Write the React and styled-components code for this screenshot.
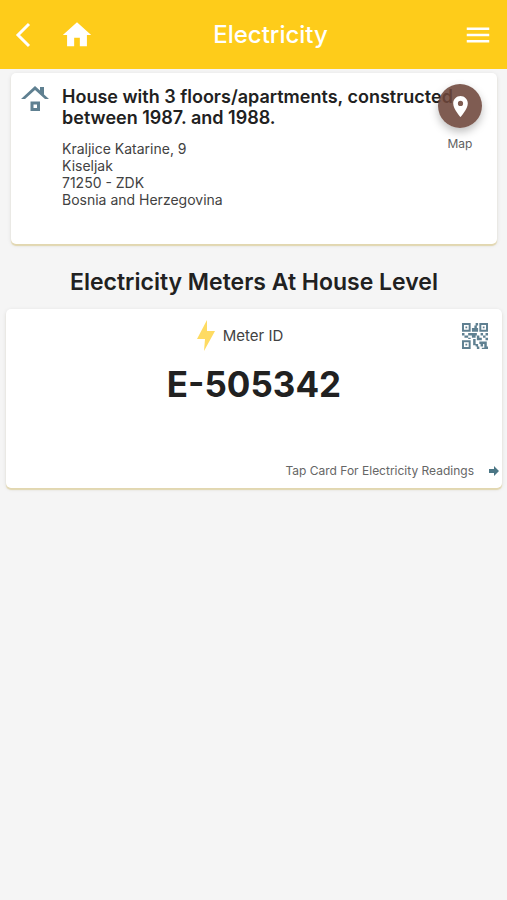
import React from "react";
import styled, { createGlobalStyle } from "styled-components";
import { MdHome, MdLocationOn, MdMenu } from "react-icons/md";

const GlobalStyle = createGlobalStyle`
  * {
    box-sizing: border-box;
  }

  body {
    margin: 0;
    background-color: #f5f5f5;
    color: #212121;
    font-family: Inter, "Liberation Sans", sans-serif;
  }
`

const Header = styled.header`
  display: grid;
  grid-template-columns: auto 1fr 46px;
  align-items: center;
  height: 69px;
  padding: 0 14px;
  background-color: #fecc1a;
  color: #fff;
`

const Title = styled.h1`
  margin: 0;
  font-size: 24px;
  font-weight: 500;
  line-height: 34px;
  text-align: center;
`

const Nav = styled.nav`
  display: flex;
  align-items: center;
  gap: 28px;
`

const IconButton = styled.button`
  display: flex;
  justify-self: ${props => props.$end ? "end" : "start"};
  padding: 0;
  border: 0;
  background: none;
  color: ${props => props.$color || "inherit"};
  cursor: pointer;
`

const Page = styled.main`
  padding: 4px 5px 20px 6px;
`

const Card = styled.section`
  position: relative;
  border-radius: 5px;
  background-color: #fff;
  box-shadow: 0 2px 1px #e2d7b0, 0 1px 4px rgba(0, 0, 0, 0.1);
`

const HouseCard = styled(Card)`
  display: flex;
  gap: 13px;
  min-height: 171px;
  margin: 0 5px;
  padding: 13px 40px 12px 10px;

  > svg {
    flex-shrink: 0;
  }
`

const HouseName = styled.h2`
  margin: 0 0 12px;
  font-size: 18px;
  font-weight: 600;
  line-height: 21px;
`

const Address = styled.address`
  color: #424242;
  font-size: 14px;
  font-style: normal;
  line-height: 17px;
`

const MapAction = styled.div`
  position: absolute;
  top: 11px;
  right: 15px;
  display: flex;
  flex-direction: column;
  align-items: center;
  gap: 8px;
  color: #616161;
  font-size: 12px;
  line-height: 16px;
`

const MapButton = styled.button`
  display: flex;
  align-items: center;
  justify-content: center;
  width: 44px;
  height: 44px;
  padding: 0;
  border: 0;
  border-radius: 50%;
  background-color: rgba(109, 70, 58, 0.88);
  color: #fff;
  box-shadow: 0 4px 8px rgba(0, 0, 0, 0.25);
  cursor: pointer;
`

const SectionTitle = styled.h2`
  margin: 24px 0 13px;
  font-size: 23px;
  font-weight: 600;
  line-height: 28px;
  text-align: center;
`

const MeterCard = styled(Card)`
  display: flex;
  flex-direction: column;
  min-height: 179px;
  padding: 11px 3px 7px;
`

const MeterTop = styled.div`
  display: flex;
  align-items: center;
  padding: 0 10px;
`

const MeterLabel = styled.p`
  display: flex;
  flex: 1;
  align-items: center;
  justify-content: center;
  gap: 8px;
  margin: 0;
  color: #424242;
  font-size: 15px;
`

const MeterId = styled.p`
  margin: 11px 0 0;
  font-size: 35px;
  font-weight: 700;
  line-height: 44px;
  text-align: center;
`

const CardLink = styled.a`
  display: flex;
  align-items: center;
  justify-content: flex-end;
  gap: 15px;
  margin-top: auto;
  color: #666;
  font-size: 12px;
  line-height: 20px;
  text-decoration: none;
`

const BackIcon = () => (
  <svg width="18" height="26" viewBox="0 0 18 26" fill="none" stroke="currentColor" strokeWidth="3">
    <path d="M15 2 4 13l11 11" />
  </svg>
)

const HouseIcon = () => (
  <svg width="28" height="28" viewBox="0 0 28 28" fill="#5f8091">
    <path d="M14 0 0 13h4l10-9 10 9h4l-5-4.600V1h-4v3.600z" />
    <path d="M9.500 15.500h9.500v9.500H9.500zm3 3v3.500h3.500v-3.500z" fillRule="evenodd" />
  </svg>
)

const BoltIcon = () => (
  <svg width="18" height="31" viewBox="0 0 18 31" fill="#fedb62">
    <path d="M10 0 0 19h8L7 31 18 11h-8z" />
  </svg>
)

const QrIcon = () => (
  <svg width="28" height="28" viewBox="-0.8 -0.8 22.6 22.6" fill="#5f8091">
    <path fillRule="evenodd" d="M0 0h7v7H0zM1.600 1.600v3.800h3.800V1.600zM14 0h7v7h-7zm1.600 1.600v3.800h3.800V1.600zM0 14h7v7H0zm1.600 1.600v3.800h3.800v-3.800z" />
    <path d="M2.800 2.800h1.400v1.400H2.800zM16.800 2.800h1.400v1.400h-1.400zM2.800 16.800h1.400v1.400H2.800z" />
    <path d="M11 0h2v2h-2zM10 2h2v2h1v3H8V4h2zM0 8h2v2H0zM2 10h3v2H2zM5 8h7v2h-1v2H8v-2H5zM12 10h2v2h2v2h-4zM15 8h2v2h-2zM19 8h2v2h-2zM17 10h2v2h-2zM19 12h2v2h-2zM5 12h2v1H5zM9 13h2v5H9zM11 17h2v2h-2zM12 19h2v2h-2zM14 15h6v2h-3v2h-2v-2h-1zM18 17h2v2h1v2h-5v-1h2z" />
  </svg>
)

const ArrowIcon = () => (
  <svg width="10" height="10" viewBox="0 0 10 10" fill="#4b7685">
    <path d="M0 3h5V0l5 5-5 5V7H0z" />
  </svg>
)

function App() {
  return (
    <>
      <GlobalStyle />
      <Header>
        <Nav>
          <IconButton aria-label="Back"><BackIcon /></IconButton>
          <IconButton aria-label="Home"><MdHome size={34} /></IconButton>
        </Nav>
        <Title>Electricity</Title>
        <IconButton $end aria-label="Menu"><MdMenu size={30} /></IconButton>
      </Header>
      <Page>
        <HouseCard>
          <HouseIcon />
          <div>
            <HouseName>House with 3 floors/apartments, constructed between 1987. and 1988.</HouseName>
            <Address>
              Kraljice Katarine, 9<br />
              Kiseljak<br />
              71250 - ZDK<br />
              Bosnia and Herzegovina
            </Address>
          </div>
          <MapAction>
            <MapButton aria-labelledby="map-label"><MdLocationOn size={25} /></MapButton>
            <span id="map-label">Map</span>
          </MapAction>
        </HouseCard>
        <SectionTitle>Electricity Meters At House Level</SectionTitle>
        <MeterCard>
          <MeterTop>
            <MeterLabel><BoltIcon />Meter ID</MeterLabel>
            <IconButton $end $color="#567a8d" aria-label="Show QR code"><QrIcon /></IconButton>
          </MeterTop>
          <MeterId>E-505342</MeterId>
          <CardLink href="#readings">Tap Card For Electricity Readings<ArrowIcon /></CardLink>
        </MeterCard>
      </Page>
    </>
  );
}

export default App;
